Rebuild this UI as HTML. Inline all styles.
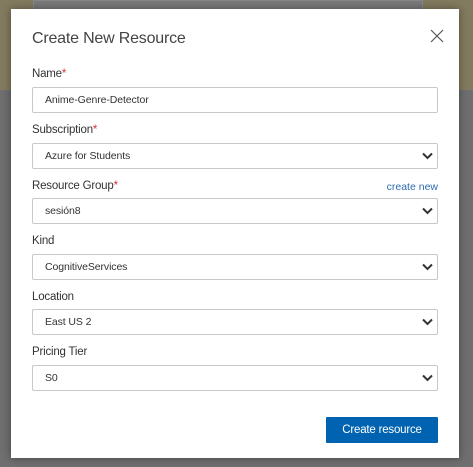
<!DOCTYPE html>
<html><head><style>
body{margin:0;width:473px;height:467px;overflow:hidden;background:#6f6f6f;font-family:"Liberation Sans",sans-serif;position:relative}
.band{position:absolute;left:0;top:0;width:473px;height:90px;background:#837b5f}
.topbar{position:absolute;left:33px;top:0;width:388px;height:10px;background:#7a7a7a;border:1px solid #888}
.modal{position:absolute;left:11px;top:9px;width:448px;height:449px;background:#fff;box-shadow:0 0 8px rgba(0,0,0,.4)}
h1{position:absolute;left:21px;top:21px;margin:0;font-weight:normal;font-size:16px;letter-spacing:-0.2px;color:#444}
.x{position:absolute;left:419px;top:20px}
.lab{position:absolute;left:21px;font-size:11.5px;letter-spacing:-0.2px;color:#333}
.lab b{color:#d13438;font-weight:normal}
.f{position:absolute;left:21px;height:24px;border:1px solid #c8c8c8;border-radius:2px;font-size:10.5px;letter-spacing:-0.1px;color:#333;line-height:24px;padding-left:12px;box-sizing:content-box;width:392px}
.f svg{position:absolute;right:4px;top:8px}
.cn{position:absolute;right:21px;top:172px;font-size:10.5px;color:#2b6cb0}
.btn{position:absolute;left:315px;top:408px;width:112px;height:26px;background:#0063b1;color:#fff;font-size:11.5px;letter-spacing:-0.2px;text-align:center;line-height:26px;border-radius:1px}
</style></head><body>
<div class="band"></div><div class="topbar"></div>
<div class="modal">
<h1>Create New Resource</h1>
<svg class="x" width="14" height="14" viewBox="0 0 14 14"><path d="M1 1L13 13M13 1L1 13" stroke="#555" stroke-width="1.2"/></svg>
<div class="lab" style="top:59px">Name<b>*</b></div>
<div class="f" style="top:78px">Anime-Genre-Detector</div>
<div class="lab" style="top:115px">Subscription<b>*</b></div>
<div class="f" style="top:134px">Azure for Students<svg width="11" height="8" viewBox="0 0 11 8"><path d="M1 1.5L5.5 6L10 1.5" stroke="#333" stroke-width="2" fill="none"/></svg></div>
<div class="lab" style="top:171px">Resource Group<b>*</b></div>
<div class="cn">create new</div>
<div class="f" style="top:189px">sesión8<svg width="11" height="8" viewBox="0 0 11 8"><path d="M1 1.5L5.5 6L10 1.5" stroke="#333" stroke-width="2" fill="none"/></svg></div>
<div class="lab" style="top:226px">Kind</div>
<div class="f" style="top:245px">CognitiveServices<svg width="11" height="8" viewBox="0 0 11 8"><path d="M1 1.5L5.5 6L10 1.5" stroke="#333" stroke-width="2" fill="none"/></svg></div>
<div class="lab" style="top:282px">Location</div>
<div class="f" style="top:300px">East US 2<svg width="11" height="8" viewBox="0 0 11 8"><path d="M1 1.5L5.5 6L10 1.5" stroke="#333" stroke-width="2" fill="none"/></svg></div>
<div class="lab" style="top:337px">Pricing Tier</div>
<div class="f" style="top:356px">S0<svg width="11" height="8" viewBox="0 0 11 8"><path d="M1 1.5L5.5 6L10 1.5" stroke="#333" stroke-width="2" fill="none"/></svg></div>
<div class="btn">Create resource</div>
</div>
</body></html>
